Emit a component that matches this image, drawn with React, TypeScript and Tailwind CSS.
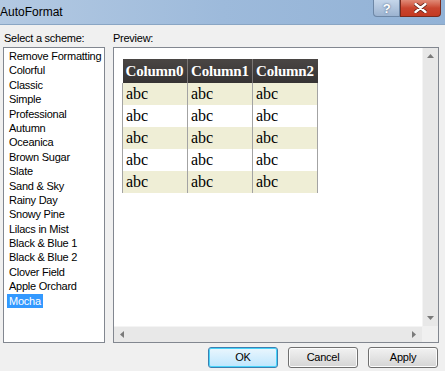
import React from "react";

const schemes = [
  "Remove Formatting",
  "Colorful",
  "Classic",
  "Simple",
  "Professional",
  "Autumn",
  "Oceanica",
  "Brown Sugar",
  "Slate",
  "Sand & Sky",
  "Rainy Day",
  "Snowy Pine",
  "Lilacs in Mist",
  "Black & Blue 1",
  "Black & Blue 2",
  "Clover Field",
  "Apple Orchard",
  "Mocha",
];

const rows = [0, 1, 2, 3, 4];

function Arrow({ dir }: { dir: "up" | "down" | "left" | "right" }) {
  const pts = {
    up: "0,4 3.5,0 7,4",
    down: "0,0 3.5,4 7,0",
    left: "4,0 0,3.5 4,7",
    right: "0,0 4,3.5 0,7",
  }[dir];
  const w = dir === "up" || dir === "down" ? 7 : 4;
  const h = dir === "up" || dir === "down" ? 4 : 7;
  return (
    <svg width={w} height={h} viewBox={`0 0 ${w} ${h}`}>
      <polygon points={pts} fill="#7a7a7a" />
    </svg>
  );
}

function Btn({ label, focused }: { label: string; focused?: boolean }) {
  return (
    <button
      className={
        focused
          ? "w-[70px] h-[21px] rounded-[3px] border border-[#3c7fb1] bg-gradient-to-b from-[#eaf6fd] to-[#bee6fd] text-[11px] text-black shadow-[inset_0_0_0_1px_#48d4fa]"
          : "w-[70px] h-[21px] rounded-[3px] border border-[#707070] bg-gradient-to-b from-[#f2f2f2] to-[#d5d5d5] text-[11px] text-black shadow-[inset_0_0_0_1px_#fcfcfc]"
      }
    >
      {label}
    </button>
  );
}

export default function App() {
  return (
    <div
      className="w-[445px] h-[371px] bg-[#f0f0f0] overflow-hidden flex flex-col text-[11px] text-black tracking-[-0.25px]"
      style={{ fontFamily: '"Liberation Sans", Arial, sans-serif' }}
    >
      {/* title bar */}
      <div className="h-[25px] flex items-start bg-gradient-to-r from-[#b3c9e2] via-[#9dbadb] to-[#92b2d6] border-b border-[#8aa6c4]">
        <div className="mt-[5px] text-[12px] leading-[15px] tracking-normal text-black">AutoFormat</div>
        <div className="ml-auto flex mr-[4px]">
          <div className="w-[27px] h-[17px] rounded-bl-[4px] border border-[#6d87a6] border-t-0 bg-gradient-to-b from-[#c5d6ea] to-[#9cb3d0] flex items-center justify-center text-[13px] font-bold text-white leading-none [text-shadow:0_0_2px_#3b5576]">
            ?
          </div>
          <div className="w-[41px] h-[17px] rounded-br-[4px] border border-[#7a2a1c] border-t-0 bg-gradient-to-b from-[#e08a77] via-[#c9452f] to-[#c43a22] flex items-center justify-center">
            <svg width="13" height="10" viewBox="0 0 13 10">
              <path d="M1.5 1 L11.5 9 M11.5 1 L1.5 9" stroke="#5a1a10" strokeWidth="4" strokeLinecap="round" />
              <path d="M1.5 1 L11.5 9 M11.5 1 L1.5 9" stroke="#ffffff" strokeWidth="2.4" strokeLinecap="round" />
            </svg>
          </div>
        </div>
      </div>

      {/* body */}
      <div className="flex pt-[6px] pl-[3px] gap-[8px]">
        <div className="w-[102px] flex flex-col">
          <div className="h-[16px] leading-[14px] pl-[1px] whitespace-nowrap">Select a scheme:</div>
          <div className="h-[296px] border border-[#828790] bg-white pt-[1px] overflow-hidden">
            {schemes.map((s) => (
              <div key={s} className="h-[14.4px] leading-[14px] whitespace-nowrap">
                <span
                  className={
                    s === "Mocha"
                      ? "inline-block ml-[3px] px-[2px] bg-[#3399ff] text-white"
                      : "inline-block ml-[3px] px-[2px]"
                  }
                >
                  {s}
                </span>
              </div>
            ))}
          </div>
        </div>

        <div className="w-[326px] flex flex-col">
          <div className="h-[16px] leading-[14px]">Preview:</div>
          <div className="h-[296px] border border-[#828790] bg-white flex flex-col">
            <div className="flex flex-1">
              <div className="flex-1 pl-[8px] pt-[11px]">
                <table
                  className="border-collapse table-fixed w-[195px] text-[16px] tracking-normal"
                  style={{ fontFamily: '"Liberation Serif", "Times New Roman", serif' }}
                >
                  <thead>
                    <tr className="bg-gradient-to-b from-[#4a4644] to-[#363333] text-white">
                      {["Column0", "Column1", "Column2"].map((c, i) => (
                        <th
                          key={c}
                          className={
                            i < 2
                              ? "w-[65px] h-[24px] px-[3px] text-left font-bold text-[15px] tracking-[-0.2px] whitespace-nowrap border-r border-[#7a7674]"
                              : "w-[65px] h-[24px] px-[3px] text-left font-bold text-[15px] tracking-[-0.2px] whitespace-nowrap"
                          }
                        >
                          {c}
                        </th>
                      ))}
                    </tr>
                  </thead>
                  <tbody>
                    {rows.map((r) => (
                      <tr key={r} className={r % 2 === 0 ? "bg-[#efeed6]" : "bg-white"}>
                        {[0, 1, 2].map((c) => (
                          <td
                            key={c}
                            className={
                              c === 0
                                ? "h-[22px] px-[3px] border-l border-r border-[#a3a3a3] leading-[22px]"
                                : "h-[22px] px-[3px] border-r border-[#a3a3a3] leading-[22px]"
                            }
                          >
                            abc
                          </td>
                        ))}
                      </tr>
                    ))}
                  </tbody>
                </table>
              </div>
              <div className="w-[16px] bg-[#e8e8e8] border-l border-[#f4f4f4] flex flex-col items-center justify-between py-[6px]">
                <Arrow dir="up" />
                <Arrow dir="down" />
              </div>
            </div>
            <div className="h-[16px] flex">
              <div className="flex-1 bg-[#e8e8e8] border-t border-[#f4f4f4] flex items-center justify-between px-[6px]">
                <Arrow dir="left" />
                <Arrow dir="right" />
              </div>
              <div className="w-[16px] bg-[#f0f0f0]" />
            </div>
          </div>
        </div>
      </div>

      {/* buttons */}
      <div className="flex justify-end gap-[10px] pr-[7px] mt-[4px]">
        <Btn label="OK" focused />
        <Btn label="Cancel" />
        <Btn label="Apply" />
      </div>
    </div>
  );
}
